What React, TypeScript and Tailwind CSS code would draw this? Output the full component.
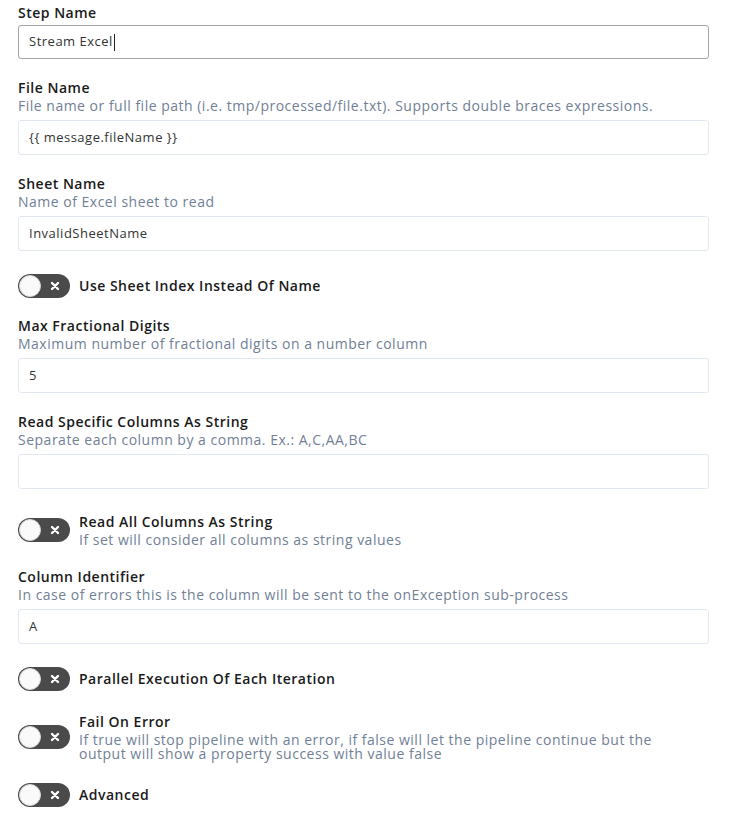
import React from "react";

const font = { fontFamily: '"Open Sans", "Liberation Sans", sans-serif' };

function Field({
  title,
  desc,
  value,
  focused,
  className = "",
}: {
  title: string;
  desc?: string;
  value: string;
  focused?: boolean;
  className?: string;
}) {
  return (
    <div className={className}>
      <div className="text-[14px] font-semibold leading-[18px] text-[#1a1a1a]">{title}</div>
      {desc && <div className="text-[14px] leading-[18px] text-[#718096]">{desc}</div>}
      <div
        className={
          focused
            ? "mt-[3px] flex h-[34px] w-[691px] items-center rounded-[3px] border border-[#a3a3a3] px-[10px] text-[13px] text-[#333]"
            : "mt-[5px] flex h-[35px] w-[691px] items-center rounded-[3px] border border-[#e2e8f0] px-[10px] text-[13px] text-[#333]"
        }
      >
        {value}
        {focused && <span className="ml-px h-[17px] w-px bg-[#222]" />}
      </div>
    </div>
  );
}

function Toggle() {
  return (
    <div className="relative h-[24px] w-[52px] shrink-0 rounded-full bg-[#4a4a4a]">
      <div className="absolute left-[1px] top-[1px] h-[22px] w-[22px] rounded-full border border-[#d8d8d8] bg-[#fafafa]" />
      <svg className="absolute left-[32px] top-[7px]" width="10" height="10" viewBox="0 0 10 10">
        <path d="M2 2L8 8M8 2L2 8" stroke="#fff" strokeWidth="2.4" strokeLinecap="round" />
      </svg>
    </div>
  );
}

function ToggleRow({
  title,
  desc,
  className = "",
}: {
  title: string;
  desc?: string;
  className?: string;
}) {
  return (
    <div className={`flex items-center gap-[9px] ${className}`}>
      <Toggle />
      <div>
        <div className="text-[14px] font-semibold leading-[18px] text-[#1a1a1a]">{title}</div>
        {desc && (
          <div className="mt-[2px] max-w-[590px] text-[14px] leading-[14px] text-[#718096]">
            {desc}
          </div>
        )}
      </div>
    </div>
  );
}

export default function App() {
  return (
    <div className="min-h-[830px] bg-white pl-[18px] pt-[4px] tracking-[0.5px]" style={font}>
      <Field title="Step Name" value="Stream Excel" focused />
      <Field
        className="mt-[20px]"
        title="File Name"
        desc="File name or full file path (i.e. tmp/processed/file.txt). Supports double braces expressions."
        value="{{ message.fileName }}"
      />
      <Field
        className="mt-[20px]"
        title="Sheet Name"
        desc="Name of Excel sheet to read"
        value="InvalidSheetName"
      />
      <ToggleRow className="mt-[23px]" title="Use Sheet Index Instead Of Name" />
      <Field
        className="mt-[19px]"
        title="Max Fractional Digits"
        desc="Maximum number of fractional digits on a number column"
        value="5"
      />
      <Field
        className="mt-[20px]"
        title="Read Specific Columns As String"
        desc="Separate each column by a comma. Ex.: A,C,AA,BC"
        value=""
      />
      <ToggleRow
        className="mt-[24px]"
        title="Read All Columns As String"
        desc="If set will consider all columns as string values"
      />
      <Field
        className="mt-[21px]"
        title="Column Identifier"
        desc="In case of errors this is the column will be sent to the onException sub-process"
        value="A"
      />
      <ToggleRow className="mt-[23px]" title="Parallel Execution Of Each Iteration" />
      <ToggleRow
        className="mt-[22px]"
        title="Fail On Error"
        desc="If true will stop pipeline with an error, if false will let the pipeline continue but the output will show a property success with value false"
      />
      <ToggleRow className="mt-[22px]" title="Advanced" />
    </div>
  );
}
